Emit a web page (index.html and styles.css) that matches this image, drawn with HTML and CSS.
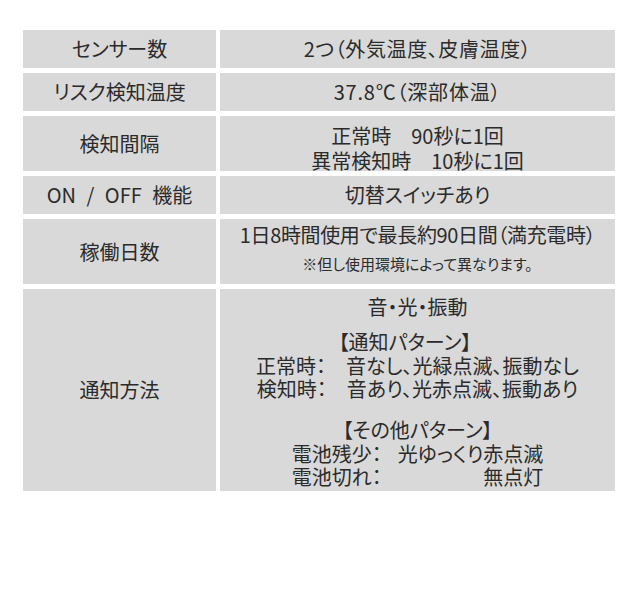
FILE: index.html
```html
<!DOCTYPE html>
<html lang="ja">
<head>
<meta charset="utf-8">
<title>仕様</title>
<link rel="stylesheet" href="styles.css">
</head>
<body>
<div class="spec">
  <div class="cell head">センサー数</div>
  <div class="cell wide">2つ（外気温度、皮膚温度）</div>

  <div class="cell head">リスク検知温度</div>
  <div class="cell wider">37.8℃（深部体温）</div>

  <div class="cell head">検知間隔</div>
  <div class="cell interval">
    <span>正常時　90秒に1回</span>
    <span>異常検知時　10秒に1回</span>
  </div>

  <div class="cell head onoff">ON / OFF 機能</div>
  <div class="cell">切替スイッチあり</div>

  <div class="cell head">稼働日数</div>
  <div class="cell days">
    <span class="tight">1日8時間使用で最長約90日間（満充電時）</span>
    <span class="note">※但し使用環境によって異なります。</span>
  </div>

  <div class="cell head">通知方法</div>
  <div class="cell notify">
    <div class="lead">音・光・振動</div>
    <div class="group first">
      <div class="title shifted">【通知パターン】</div>
      <div>正常時：　音なし、光緑点滅、振動なし</div>
      <div>検知時：　音あり、光赤点滅、振動あり</div>
    </div>
    <div class="group second">
      <div class="title">【その他パターン】</div>
      <div class="pairs">
        <span>電池残少：</span><span>光ゆっくり赤点滅</span>
        <span>電池切れ：</span><span class="end">無点灯</span>
      </div>
    </div>
  </div>
</div>
</body>
</html>
```
FILE: styles.css
```css
html, body {
  margin: 0;
  padding: 0;
  background: #ffffff;
}

body {
  font-family: "Noto Sans CJK JP", "Noto Sans", sans-serif;
  font-feature-settings: "palt";
  color: #2b2b2b;
}

.spec {
  margin: 30px 0 0 23px;
  width: 592px;
  display: grid;
  grid-template-columns: 193px 395px;
  grid-template-rows: 38px 38px 55px 38px 65px 202px;
  column-gap: 4px;
  row-gap: 5px;
}

.cell {
  background: #d9d9d9;
  display: flex;
  flex-direction: column;
  align-items: center;
  justify-content: center;
  text-align: center;
  font-size: 20px;
  line-height: 24px;
  white-space: nowrap;
  box-sizing: border-box;
}

.wide {
  letter-spacing: 0.6px;
}

.wider {
  letter-spacing: 0.8px;
}

.onoff {
  word-spacing: 6px;
}

.interval {
  line-height: 25px;
  padding-top: 8px;
}

.days {
  justify-content: flex-start;
  padding-top: 4px;
}

.tight {
  letter-spacing: -0.35px;
}

.note {
  font-size: 15px;
  line-height: 18px;
  margin-top: 8px;
}

.notify {
  justify-content: flex-start;
  padding-top: 6px;
  line-height: 23.5px;
}

.notify .group {
  display: flex;
  flex-direction: column;
  align-items: center;
}

.notify .first {
  margin-top: 11.5px;
}

.notify .second {
  margin-top: 17.5px;
}

.notify .shifted {
  padding-right: 25px;
}

.pairs {
  display: grid;
  grid-template-columns: auto auto;
  column-gap: 16px;
  text-align: left;
}

.pairs .end {
  justify-self: end;
}
```
